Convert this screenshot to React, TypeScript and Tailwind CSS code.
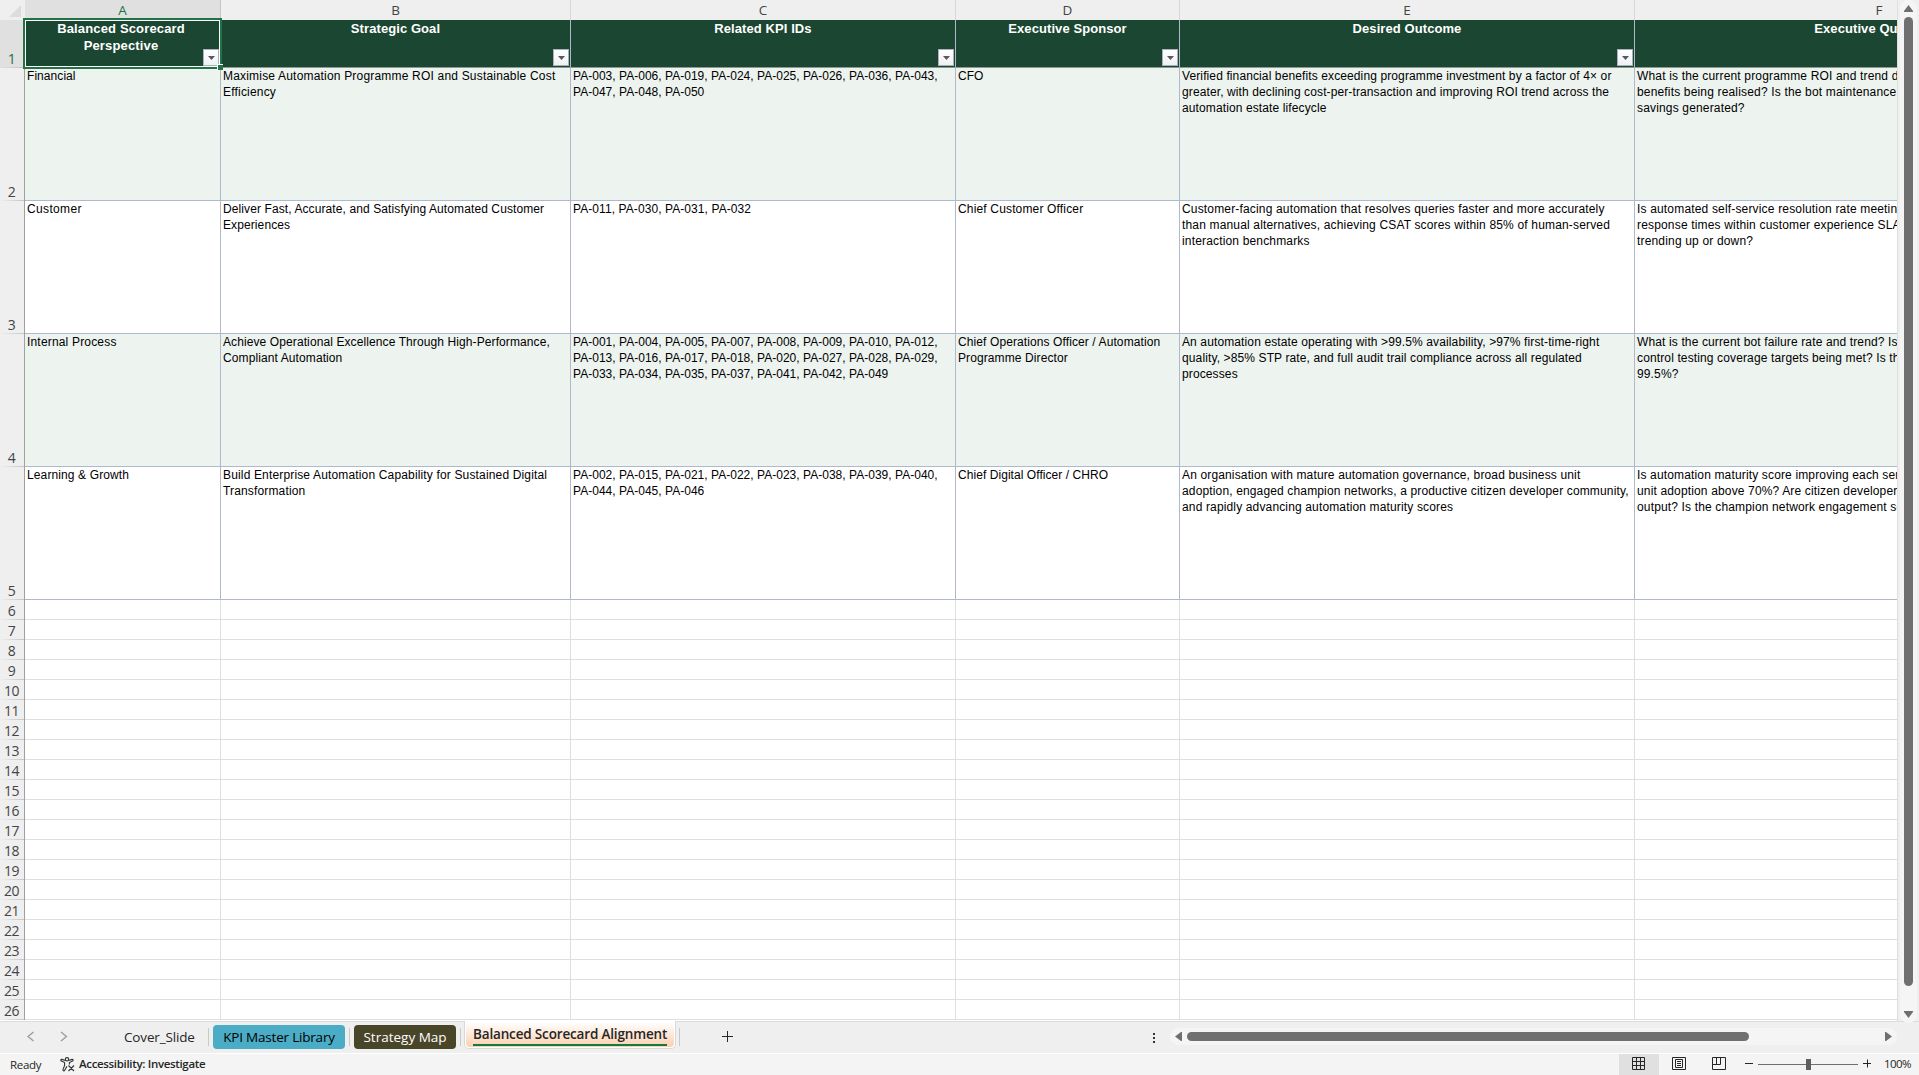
import React from "react";

type Cell = {
  lines: string[];
  tracking: string;
};

type Row = {
  id: number;
  shaded: boolean;
  cells: Cell[];
};

const columns = [
  { letter: "A", title: ["Balanced Scorecard", "Perspective"] },
  { letter: "B", title: ["Strategic Goal"] },
  { letter: "C", title: ["Related KPI IDs"] },
  { letter: "D", title: ["Executive Sponsor"] },
  { letter: "E", title: ["Desired Outcome"] },
  { letter: "F", title: ["Executive Questions"] }
];

const rows: Row[] = [
  {
    id: 2,
    shaded: true,
    cells: [
      { tracking: "tracking-[0.06px]", lines: ["Financial"] },
      {
        tracking: "tracking-[0.19px]",
        lines: ["Maximise Automation Programme ROI and Sustainable Cost", "Efficiency"]
      },
      {
        tracking: "tracking-[0.025px]",
        lines: [
          "PA-003, PA-006, PA-019, PA-024, PA-025, PA-026, PA-036, PA-043,",
          "PA-047, PA-048, PA-050"
        ]
      },
      { tracking: "tracking-[0.05px]", lines: ["CFO"] },
      {
        tracking: "tracking-[0.113px]",
        lines: [
          "Verified financial benefits exceeding programme investment by a factor of 4× or",
          "greater, with declining cost-per-transaction and improving ROI trend across the",
          "automation estate lifecycle"
        ]
      },
      {
        tracking: "tracking-[0.165px]",
        lines: [
          "What is the current programme ROI and trend direction?",
          "benefits being realised? Is the bot maintenance cost",
          "savings generated?"
        ]
      }
    ]
  },
  {
    id: 3,
    shaded: false,
    cells: [
      { tracking: "tracking-[0.35px]", lines: ["Customer"] },
      {
        tracking: "tracking-[0.1px]",
        lines: ["Deliver Fast, Accurate, and Satisfying Automated Customer", "Experiences"]
      },
      { tracking: "tracking-[0.08px]", lines: ["PA-011, PA-030, PA-031, PA-032"] },
      { tracking: "tracking-[0.16px]", lines: ["Chief Customer Officer"] },
      {
        tracking: "tracking-[0.165px]",
        lines: [
          "Customer-facing automation that resolves queries faster and more accurately",
          "than manual alternatives, achieving CSAT scores within 85% of human-served",
          "interaction benchmarks"
        ]
      },
      {
        tracking: "tracking-[0.17px]",
        lines: [
          "Is automated self-service resolution rate meeting",
          "response times within customer experience SLAs?",
          "trending up or down?"
        ]
      }
    ]
  },
  {
    id: 4,
    shaded: true,
    cells: [
      { tracking: "tracking-[0.18px]", lines: ["Internal Process"] },
      {
        tracking: "tracking-[0.1px]",
        lines: ["Achieve Operational Excellence Through High-Performance,", "Compliant Automation"]
      },
      {
        tracking: "tracking-[0.025px]",
        lines: [
          "PA-001, PA-004, PA-005, PA-007, PA-008, PA-009, PA-010, PA-012,",
          "PA-013, PA-016, PA-017, PA-018, PA-020, PA-027, PA-028, PA-029,",
          "PA-033, PA-034, PA-035, PA-037, PA-041, PA-042, PA-049"
        ]
      },
      {
        tracking: "tracking-[0.1px]",
        lines: ["Chief Operations Officer / Automation", "Programme Director"]
      },
      {
        tracking: "tracking-[0.12px]",
        lines: [
          "An automation estate operating with >99.5% availability, >97% first-time-right",
          "quality, >85% STP rate, and full audit trail compliance across all regulated",
          "processes"
        ]
      },
      {
        tracking: "tracking-[0.13px]",
        lines: [
          "What is the current bot failure rate and trend? Is the",
          "control testing coverage targets being met? Is the",
          "99.5%?"
        ]
      }
    ]
  },
  {
    id: 5,
    shaded: false,
    cells: [
      { tracking: "tracking-[0.12px]", lines: ["Learning & Growth"] },
      {
        tracking: "tracking-[0.155px]",
        lines: ["Build Enterprise Automation Capability for Sustained Digital", "Transformation"]
      },
      {
        tracking: "tracking-[0.025px]",
        lines: [
          "PA-002, PA-015, PA-021, PA-022, PA-023, PA-038, PA-039, PA-040,",
          "PA-044, PA-045, PA-046"
        ]
      },
      { tracking: "tracking-[0.06px]", lines: ["Chief Digital Officer / CHRO"] },
      {
        tracking: "tracking-[0.145px]",
        lines: [
          "An organisation with mature automation governance, broad business unit",
          "adoption, engaged champion networks, a productive citizen developer community,",
          "and rapidly advancing automation maturity scores"
        ]
      },
      {
        tracking: "tracking-[0.15px]",
        lines: [
          "Is automation maturity score improving each semester?",
          "unit adoption above 70%? Are citizen developers",
          "output? Is the champion network engagement score"
        ]
      }
    ]
  }
];

const emptyRows = Array.from({ length: 21 }, (_, i) => i + 6);

const grid =
  "grid grid-cols-[25px_196px_350px_385px_224px_455px_489px] w-[2124px]";

const FilterButton = () => (
  <div className="absolute right-px bottom-px w-4 h-[17px] bg-linear-to-b from-white to-[#eef0f6] border border-[#abb0ba] flex items-center justify-center">
    <svg width="7" height="4" viewBox="0 0 7 4">
      <path d="M0 0h7L3.5 4z" fill="#595959" />
    </svg>
  </div>
);

const RowNumber = ({ id, active }: { id: number; active?: boolean }) => (
  <div
    className={`relative border-r border-[#a0a0a0] flex items-end justify-center pr-px pb-px text-[14px] leading-[17px] tracking-[-0.6px] ${
      active ? "bg-[#e0e0e0] text-[#217346]" : "bg-[#efefef] text-[#444]"
    }`}
  >
    <span>{id}</span>
    <div className="absolute left-0 bottom-0 w-full h-px bg-linear-to-r from-transparent to-[#c4c4c4]" />
  </div>
);

const Sheet = () => (
  <div className="relative w-[1897px] h-[1021px] overflow-hidden bg-white">
    <div className={`${grid} h-5`}>
      <div className="bg-[#efefef] border-b border-[#a0a0a0] flex justify-end items-end pr-1 pb-[3px]">
        <svg width="12" height="12" viewBox="0 0 12 12">
          <path d="M12 0v12H0z" fill="#dcdcdc" />
        </svg>
      </div>
      {columns.map((col) => (
        <div
          key={col.letter}
          className={`border-r border-b border-b-[#9fa8a2] text-center text-[13.5px] leading-[20px] ${
            col.letter === "A"
              ? "bg-[#e0e0e0] text-[#217346] border-r-[#c4c4c4]"
              : "bg-[#efefef] text-[#444] border-r-[#d8d8d8]"
          }`}
        >
          {col.letter}
        </div>
      ))}
    </div>
    <div className={`${grid} h-12`}>
      <RowNumber id={1} active />
      {columns.map((col) => (
        <div
          key={col.letter}
          className={`relative bg-[#1b4632] border-r border-b border-[#b0b8cc] border-b-[#8d9a94] text-white font-bold text-center text-[13px] leading-[17px] font-['Liberation_Sans',Arial,sans-serif] ${
            col.letter === "A" ? "pr-[3px] tracking-[0.15px]" : "tracking-[0.08px]"
          }`}
        >
          {col.title.map((line) => (
            <div key={line} className="whitespace-nowrap">
              {line}
            </div>
          ))}
          <FilterButton />
        </div>
      ))}
    </div>
    {rows.map((row) => (
      <div key={row.id} className={`${grid} h-[133px]`}>
        <RowNumber id={row.id} />
        {row.cells.map((cell, index) => (
          <div
            key={index}
            className={`border-r border-b border-[#b0b8cc] pl-[2px] text-black text-[12px] leading-4 font-['Liberation_Sans',Arial,sans-serif] ${
              cell.tracking
            } ${row.shaded ? "bg-[#edf3ef]" : "bg-white"}`}
          >
            {cell.lines.map((line) => (
              <div key={line} className="whitespace-nowrap">
                {line}
              </div>
            ))}
          </div>
        ))}
      </div>
    ))}
    {emptyRows.map((id) => (
      <div key={id} className={`${grid} h-5`}>
        <RowNumber id={id} />
        {columns.map((col) => (
          <div key={col.letter} className="border-r border-b border-[#dfdfdf]" />
        ))}
      </div>
    ))}
    {/* selection frame around A1 */}
    <div className="absolute left-[23px] top-[18px] w-[199px] h-[51px] border-2 border-[#217346] pointer-events-none">
      <div className="w-full h-full border border-white" />
      <div className="absolute -right-[3px] -bottom-[3px] w-[6px] h-[6px] bg-[#217346] border-t border-l border-white" />
    </div>
  </div>
);

const VerticalScroll = () => (
  <div className="w-[22px] h-[1021px] bg-[#efefef] border-l border-[#dfdfdf] pl-[2px]">
    <div className="w-[17px] h-[1023px] rounded-full bg-[#f5f5f5] flex flex-col items-center pt-[5px] pb-[5px]">
      <svg width="9" height="7" viewBox="0 0 9 7">
        <path d="M4.5 0L9 6v1H0V6z" fill="#6f6f6f" />
      </svg>
      <div className="mt-[5px] w-[9px] h-[969px] rounded-full bg-[#707070]" />
      <svg className="mt-[25px]" width="9" height="7" viewBox="0 0 9 7">
        <path d="M4.5 7L9 1V0H0v1z" fill="#6f6f6f" />
      </svg>
    </div>
  </div>
);

const Divider = () => <div className="w-px h-[18px] mt-[6px] bg-[#c9c9c9]" />;

const TabBar = () => (
  <div className="h-8 bg-[#efefef] border-t border-[#dcdcdc] flex">
    <div className="w-[208px] flex text-[#262626]">
      <svg className="ml-[27px] mt-[9px]" width="8" height="11" viewBox="0 0 8 11">
        <path d="M6.5 1L1 5.5 6.5 10" fill="none" stroke="#9a9a9a" strokeWidth="1.3" />
      </svg>
      <svg className="ml-[25px] mt-[9px]" width="8" height="11" viewBox="0 0 8 11">
        <path d="M1 1l5.5 4.5L1 10" fill="none" stroke="#9a9a9a" strokeWidth="1.3" />
      </svg>
      <span className="ml-[56px] text-[13.5px] leading-[30px] tracking-[-0.15px]">Cover_Slide</span>
    </div>
    <Divider />
    <div className="ml-1 mr-[4px] mt-[3px] w-[132px] h-6 rounded-[4px] bg-[#4bacc6] text-black text-center text-[13.5px] leading-6 tracking-[-0.2px] whitespace-nowrap">
      KPI Master Library
    </div>
    <Divider />
    <div className="ml-1 mr-[4px] mt-[3px] w-[102px] h-6 rounded-[4px] bg-[#494529] text-white text-center text-[13.5px] leading-6 whitespace-nowrap">
      Strategy Map
    </div>
    <Divider />
    <div className="ml-[3px] -mt-px w-[212px] h-[28px] rounded-b-[5px] bg-white border border-t-0 border-[#d9d9d9] px-px pb-px">
      <div className="h-full rounded-b-[4px] bg-linear-to-b from-white from-5% to-[#fbcfae] px-[7px] pt-[3px]">
        <div className="border-b-2 border-[#107c41] h-[22px] text-center text-[#262626] font-semibold text-[13.5px] leading-[20px] tracking-[-0.16px] whitespace-nowrap">
          Balanced Scorecard Alignment
        </div>
      </div>
    </div>
    <div className="ml-[3px]">
      <Divider />
    </div>
    <svg className="ml-[42px] mt-[9px]" width="11" height="11" viewBox="0 0 11 11">
      <path d="M5.5 0v11M0 5.5h11" stroke="#262626" />
    </svg>
    <div className="ml-[420px] mt-[11px] flex flex-col gap-[2px]">
      <div className="w-[2px] h-[2px] bg-[#333]" />
      <div className="w-[2px] h-[2px] bg-[#333]" />
      <div className="w-[2px] h-[2px] bg-[#333]" />
    </div>
    <div className="ml-[15px] mt-[6px] w-[727px] h-[17px] rounded-full bg-[#f5f5f5] flex items-center pl-[5px] pr-[5px]">
      <svg width="7" height="9" viewBox="0 0 7 9">
        <path d="M0 4.5L6 0h1v9H6z" fill="#6f6f6f" />
      </svg>
      <div className="ml-[5px] w-[562px] h-[9px] rounded-full bg-[#707070]" />
      <svg className="ml-auto" width="7" height="9" viewBox="0 0 7 9">
        <path d="M7 4.5L1 0H0v9h1z" fill="#6f6f6f" />
      </svg>
    </div>
  </div>
);

const StatusBar = () => (
  <div className="h-[22px] bg-[#f4f4f4] border-t border-white flex text-[#262626]">
    <span className="ml-[10px] w-[50px] text-[11.5px] leading-[22px] tracking-[-0.3px]">Ready</span>
    <svg className="mt-[3px]" width="15" height="15" viewBox="0 0 15 15" fill="none" stroke="#333" strokeWidth="1.1">
      <circle cx="7" cy="2.3" r="1.7" />
      <path d="M5.3 3.6L2 2.4C.8 2.1.4 3.7 1.4 4.1L4.6 5.5v3L3 12.6c-.3 1.2 1.1 1.7 1.7.6L7 9.2" />
      <path d="M8.7 3.6L12 2.4c1.2-.3 1.6 1.3.6 1.7L9.4 5.5v2M8.5 8.5l5.5 5.5M14 8.5L8.5 14" />
    </svg>
    <span className="ml-1 text-[11.5px] leading-[20px] font-semibold tracking-[-0.33px]">
      Accessibility: Investigate
    </span>
    <div className="ml-auto flex">
      <div className="w-10 bg-[#e0e0e0] flex pl-[13px] pt-[3px]">
        <svg width="13" height="13" viewBox="0 0 13 13" fill="none" stroke="#262626">
          <path d="M.5.5h12v12H.5zM4.5.5v12M8.5.5v12M.5 4.5h12M.5 8.5h12" />
        </svg>
      </div>
      <div className="w-10 flex pl-[13px] pt-[3px]">
        <svg width="14" height="13" viewBox="0 0 14 13" fill="none" stroke="#262626">
          <path d="M.5.5h13v12H.5zM3.5 2.5h7v8h-7zM5 4.5h4M5 6.5h4M5 8.5h4" />
        </svg>
      </div>
      <div className="w-10 flex pl-[13px] pt-[3px]">
        <svg width="14" height="13" viewBox="0 0 14 13" fill="none" stroke="#262626">
          <path d="M.5.5h13v12H.5zM.5 7.5h8v-7M4.5.5v7" />
        </svg>
      </div>
      <svg className="ml-[6px] mt-[5px]" width="126" height="11" viewBox="0 0 126 11">
        <path d="M0 4.5h8M118 4.5h8M122.5 .5v8" stroke="#262626" />
        <path d="M13 5.5h100" stroke="#707070" />
        <path d="M61 0h5v11h-5z" fill="#5f5f5f" />
      </svg>
      <span className="ml-[13px] w-[35px] text-[11.5px] leading-[20px] tracking-[-0.6px]">100%</span>
    </div>
  </div>
);

const App: React.FC = () => {
  return (
    <div className="w-[1919px] h-[1075px] overflow-hidden bg-[#efefef] font-['Open_Sans','Noto_Sans',sans-serif]">
      <div className="flex h-[1021px]">
        <Sheet />
        <VerticalScroll />
      </div>
      <TabBar />
      <StatusBar />
    </div>
  );
};

export default App;
